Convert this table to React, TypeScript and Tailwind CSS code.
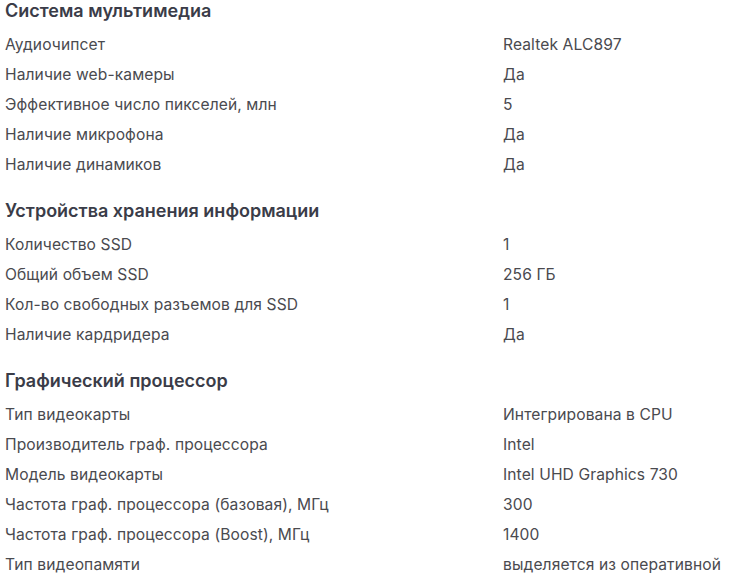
const sections: { title: string; rows: [string, string][] }[] = [
  {
    title: 'Система мультимедиа',
    rows: [
      ['Аудиочипсет', 'Realtek ALC897'],
      ['Наличие web-камеры', 'Да'],
      ['Эффективное число пикселей, млн', '5'],
      ['Наличие микрофона', 'Да'],
      ['Наличие динамиков', 'Да'],
    ],
  },
  {
    title: 'Устройства хранения информации',
    rows: [
      ['Количество SSD', '1'],
      ['Общий объем SSD', '256 ГБ'],
      ['Кол-во свободных разъемов для SSD', '1'],
      ['Наличие кардридера', 'Да'],
    ],
  },
  {
    title: 'Графический процессор',
    rows: [
      ['Тип видеокарты', 'Интегрирована в CPU'],
      ['Производитель граф. процессора', 'Intel'],
      ['Модель видеокарты', 'Intel UHD Graphics 730'],
      ['Частота граф. процессора (базовая), МГц', '300'],
      ['Частота граф. процессора (Boost), МГц', '1400'],
      ['Тип видеопамяти', 'выделяется из оперативной'],
    ],
  },
];

export default function App() {
  return (
    <div className="w-[731px] h-[577px] overflow-hidden bg-white pl-[5px] font-['Inter',sans-serif]">
      <div className="flex flex-col gap-[20px]">
        {sections.map((s) => (
          <section key={s.title}>
            <h3 className="h-[22px] mb-[8px] text-[18px] leading-[22px] font-semibold text-[#3a3c48]">
              {s.title}
            </h3>
            {s.rows.map(([k, v]) => (
              <div key={k} className="flex h-[30px] items-center text-[15.6px] tracking-[0.1px] text-[#4a4a4f]">
                <span className="w-[498px] shrink-0">{k}</span>
                <span>{v}</span>
              </div>
            ))}
          </section>
        ))}
      </div>
    </div>
  );
}
